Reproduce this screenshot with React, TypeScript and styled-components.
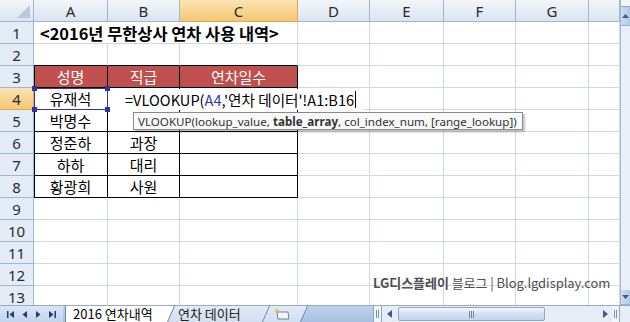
import React from 'react';
import styled, { createGlobalStyle } from 'styled-components';

const GRID = '#d0d7e5';
const HEAD_LINE = '#9eb6ce';
const REF_BLUE = '#2e34a6';
const KR = `"Noto Sans CJK KR", "Noto Sans", sans-serif`;
const LATIN = `"Noto Sans", "Noto Sans CJK KR", sans-serif`;

const GlobalStyle = createGlobalStyle`
  html, body { margin: 0; padding: 0; overflow: hidden; background: #fff; }
  body { font-family: ${KR}; }
`;

const Window = styled.div`
  width: 630px;
  height: 322px;
  display: flex;
  flex-direction: column;
  overflow: hidden;
`;

const Body = styled.div`
  display: flex;
  height: 305px;
`;

const Sheet = styled.div`
  position: relative;
  flex: 1;
  overflow: hidden;
  display: grid;
  grid-template-columns: 34px 74px 72px 118px 72px 74px 72px 73px 1fr;
  grid-auto-rows: 22px;
`;

const Corner = styled.div`
  position: relative;
  box-sizing: border-box;
  border-right: 1px solid ${HEAD_LINE};
  border-bottom: 1px solid ${HEAD_LINE};
  background: linear-gradient(#f3f6fb, #dbe4f0);
  &::after {
    content: '';
    position: absolute;
    right: 3px;
    bottom: 3px;
    border-left: 13px solid transparent;
    border-bottom: 13px solid #b9c9dd;
  }
`;

const ColHead = styled.div<{ $active?: boolean }>`
  box-sizing: border-box;
  border-right: 1px solid ${(p) => (p.$active ? '#e8a64a' : HEAD_LINE)};
  border-bottom: 1px solid ${(p) => (p.$active ? '#e8a64a' : HEAD_LINE)};
  background: ${(p) =>
    p.$active ? 'linear-gradient(#fbe3b4, #f5c873)' : 'linear-gradient(#f3f6fb, #dbe4f0)'};
  display: flex;
  align-items: center;
  justify-content: center;
  font-family: ${LATIN};
  font-size: 15px;
  color: #2b2b2b;
`;

const RowHead = styled.div<{ $active?: boolean }>`
  box-sizing: border-box;
  border-right: 1px solid ${(p) => (p.$active ? '#e8a64a' : HEAD_LINE)};
  border-bottom: 1px solid ${(p) => (p.$active ? '#e8a64a' : HEAD_LINE)};
  background: ${(p) => (p.$active ? 'linear-gradient(#fbe3b4, #f5c873)' : '#e4ecf7')};
  display: flex;
  align-items: center;
  justify-content: center;
  font-family: ${LATIN};
  font-size: 15px;
  color: #2b2b2b;
`;

const Cell = styled.div<{
  $right?: string;
  $bottom?: string;
  $edge?: boolean;
  $fill?: string;
  $span?: number;
  $bold?: boolean;
  $white?: boolean;
  $start?: boolean;
}>`
  box-sizing: border-box;
  border-right: 1px solid ${(p) => p.$right ?? GRID};
  border-bottom: 1px solid ${(p) => p.$bottom ?? GRID};
  background: ${(p) => p.$fill ?? '#fff'};
  box-shadow: ${(p) => (p.$edge ? 'inset 1px 0 0 #000' : 'none')};
  grid-column: span ${(p) => p.$span ?? 1};
  display: flex;
  align-items: center;
  justify-content: ${(p) => (p.$start ? 'flex-start' : 'center')};
  padding-left: ${(p) => (p.$start ? '6px' : '0')};
  font-size: ${(p) => (p.$bold ? '16.4px' : '15px')};
  font-weight: ${(p) => (p.$bold ? 700 : 400)};
  color: ${(p) => (p.$white ? '#fff' : '#000')};
  white-space: nowrap;
`;

const EditBox = styled.div`
  position: absolute;
  left: 109px;
  top: 89px;
  width: 254px;
  height: 21px;
  box-sizing: border-box;
  padding-left: 16px;
  background: #fff;
  display: flex;
  align-items: center;
  font-size: 14.6px;
  white-space: nowrap;
  color: #000;
`;

const Ref = styled.span`
  color: ${REF_BLUE};
`;

const Caret = styled.span`
  display: inline-block;
  width: 1px;
  height: 17px;
  margin-left: 1px;
  background: #000;
`;

const Selection = styled.div`
  position: absolute;
  left: 34px;
  top: 88px;
  width: 74px;
  height: 22px;
  box-sizing: border-box;
  border: 1px solid ${REF_BLUE};
`;

const Handle = styled.span<{ $x: 'left' | 'right'; $y: 'top' | 'bottom' }>`
  position: absolute;
  width: 5px;
  height: 5px;
  background: ${REF_BLUE};
  ${(p) => p.$x}: -3px;
  ${(p) => p.$y}: -3px;
`;

const Tooltip = styled.div`
  position: absolute;
  left: 133px;
  top: 112px;
  width: 390px;
  height: 18px;
  box-sizing: border-box;
  padding-left: 4px;
  background: #f9f9f9;
  border: 1px solid #8a8a8a;
  box-shadow: 2px 2px 2px rgba(0, 0, 0, 0.25);
  display: flex;
  align-items: center;
  font-family: ${LATIN};
  font-size: 11.6px;
  color: #333;
  white-space: nowrap;
`;

const Watermark = styled.div`
  position: absolute;
  left: 373px;
  top: 273px;
  font-size: 13px;
  letter-spacing: -0.05px;
  color: #4f4f4f;
  white-space: nowrap;
  b {
    font-weight: 700;
  }
`;

const VScroll = styled.div`
  width: 10px;
  display: flex;
  flex-direction: column;
  box-sizing: border-box;
  border-left: 1px solid #a7bad4;
  background: #e6edf7;
`;

const SplitBox = styled.div`
  height: 7px;
  box-sizing: border-box;
  border-bottom: 1px solid #8ea6c8;
  background: #f2f6fb;
`;

const ArrowButton = styled.div<{ $h: number }>`
  height: ${(p) => p.$h}px;
  display: flex;
  align-items: center;
  justify-content: center;
  background: linear-gradient(90deg, #cfdcee, #b4c8e4);
  border-bottom: 1px solid #9ab0d0;
`;

const Track = styled.div`
  flex: 1;
  background: #e9eff8;
`;

const TabBar = styled.div`
  height: 17px;
  display: flex;
  box-sizing: border-box;
  border-top: 1px solid #93aacb;
  background: linear-gradient(#dbe6f4, #c3d4eb);
`;

const NavButtons = styled.div`
  width: 63px;
  display: flex;
  align-items: center;
  justify-content: space-around;
  padding: 0 4px;
  box-sizing: border-box;
`;

const Tabs = styled.div`
  width: 310px;
  display: flex;
  background: linear-gradient(#bfd1ea, #a8c0e2);
`;

const Tab = styled.div<{ $w: number; $layer: number; $active?: boolean; $first?: boolean }>`
  position: relative;
  z-index: ${(p) => p.$layer};
  width: ${(p) => p.$w}px;
  margin-left: ${(p) => (p.$first ? '2px' : '-7px')};
  box-sizing: border-box;
  padding: 0 0 1px ${(p) => (p.$active ? '8px' : '10px')};
  display: flex;
  align-items: center;
  font-size: 13px;
  line-height: 14px;
  color: ${(p) => (p.$active ? '#000' : '#222')};
  white-space: nowrap;

  &::before,
  &::after {
    content: '';
    position: absolute;
    top: 0;
    bottom: 0;
    z-index: -1;
  }
  &::before {
    left: 0;
    right: 0;
    background: #6f88b0;
    clip-path: polygon(0 0, 100% 0, calc(100% - 7px) 100%, 0 100%);
  }
  &::after {
    left: ${(p) => (p.$active ? '1px' : '0')};
    right: 0;
    background: ${(p) => (p.$active ? '#ffffff' : 'linear-gradient(#e3ebf6, #d2dff0)')};
    clip-path: polygon(0 0, calc(100% - 1px) 0, calc(100% - 8px) 100%, 0 100%);
  }
`;

const HScroll = styled.div`
  flex: 1;
  display: flex;
  align-items: stretch;
  background: #e6edf7;
  border-left: 1px solid #8ea6c8;
`;

const HSplit = styled.div`
  width: 7px;
  display: flex;
  align-items: center;
  justify-content: center;
  background: #f2f6fb;
  border-right: 1px solid #8ea6c8;
  &::after {
    content: '';
    width: 1px;
    height: 8px;
    border-left: 1px solid #7a8fb0;
    border-right: 1px solid #7a8fb0;
  }
`;

const HArrow = styled.div`
  width: 14px;
  display: flex;
  align-items: center;
  justify-content: center;
`;

const HTrack = styled.div`
  flex: 1;
  display: flex;
  align-items: center;
  padding: 1px 2px;
`;

const Thumb = styled.div`
  width: 147px;
  height: 14px;
  box-sizing: border-box;
  border: 1px solid #8ea6c8;
  border-radius: 2px;
  background: linear-gradient(#f4f7fc, #d2deef 55%, #c4d4ea);
  display: flex;
  align-items: center;
  justify-content: center;
  &::after {
    content: '';
    width: 5px;
    height: 7px;
    background: repeating-linear-gradient(90deg, #6f84a6 0 1px, transparent 1px 2px);
  }
`;

const Corner2 = styled.div`
  width: 10px;
  background: #e6edf7;
`;

function NavIcon({ kind }: { kind: 'first' | 'prev' | 'next' | 'last' }) {
  const c = '#1e3c78';
  return (
    <svg width="9" height="9" viewBox="0 0 9 9">
      {kind === 'first' && (
        <>
          <rect x="1" y="1" width="1.5" height="7" fill={c} />
          <path d="M8 1 L3.5 4.5 L8 8 Z" fill={c} />
        </>
      )}
      {kind === 'prev' && <path d="M7 1 L2.5 4.5 L7 8 Z" fill={c} />}
      {kind === 'next' && <path d="M2 1 L6.5 4.5 L2 8 Z" fill={c} />}
      {kind === 'last' && (
        <>
          <path d="M1 1 L5.5 4.5 L1 8 Z" fill={c} />
          <rect x="6.5" y="1" width="1.5" height="7" fill={c} />
        </>
      )}
    </svg>
  );
}

function InsertSheetIcon() {
  return (
    <svg width="18" height="14" viewBox="0 0 18 14">
      <path d="M4 5 H15 L16 12 H5 Z" fill="#f4f7fb" stroke="#6d7f9c" strokeWidth="1" />
      <path d="M4 1 L5 3.5 L7.5 4 L5 4.6 L4 7 L3 4.6 L0.5 4 L3 3.5 Z" fill="#f2b623" />
    </svg>
  );
}

type RowData = { cells: React.ReactNode[] };

const people = [
  ['유재석', ''],
  ['박명수', ''],
  ['정준하', '과장'],
  ['하하', '대리'],
  ['황광희', '사원'],
];

const COLS = ['A', 'B', 'C', 'D', 'E', 'F', 'G', ''];

function plainCells(from: number) {
  return COLS.slice(from).map((_, i) => <Cell key={`p${from + i}`} />);
}

export default function App() {
  const rows: RowData[] = [];

  rows.push({
    cells: [
      <Cell key="title" $span={3} $start $bold>
        &lt;2016년 무한상사 연차 사용 내역&gt;
      </Cell>,
      ...plainCells(3),
    ],
  });
  rows.push({
    cells: [
      <Cell key="a2" $bottom="#000" />,
      <Cell key="b2" $bottom="#000" />,
      <Cell key="c2" $bottom="#000" />,
      ...plainCells(3),
    ],
  });
  rows.push({
    cells: [
      <Cell key="h1" $fill="#c0504d" $white $right="#000" $bottom="#000" $edge>
        성명
      </Cell>,
      <Cell key="h2" $fill="#c0504d" $white $right="#000" $bottom="#000">
        직급
      </Cell>,
      <Cell key="h3" $fill="#c0504d" $white $right="#000" $bottom="#000">
        연차일수
      </Cell>,
      ...plainCells(3),
    ],
  });
  people.forEach(([name, rank]) => {
    rows.push({
      cells: [
        <Cell key="n" $right="#000" $bottom="#000" $edge>
          {name}
        </Cell>,
        <Cell key="r" $right="#000" $bottom="#000">
          {rank}
        </Cell>,
        <Cell key="d" $right="#000" $bottom="#000" />,
        ...plainCells(3),
      ],
    });
  });
  for (let i = 0; i < 5; i++) rows.push({ cells: plainCells(0) });

  return (
    <Window>
      <GlobalStyle />
      <Body>
        <Sheet>
          <Corner />
          {COLS.map((c, i) => (
            <ColHead key={`c${i}`} $active={c === 'C'}>
              {c}
            </ColHead>
          ))}
          {rows.map((row, r) => (
            <React.Fragment key={r}>
              <RowHead $active={r === 3}>{r + 1}</RowHead>
              {row.cells}
            </React.Fragment>
          ))}

          <EditBox>
            =VLOOKUP(<Ref>A4</Ref>,'연차 데이터'!A1:B16
            <Caret />
          </EditBox>
          <Selection>
            <Handle $x="left" $y="top" />
            <Handle $x="right" $y="top" />
            <Handle $x="left" $y="bottom" />
            <Handle $x="right" $y="bottom" />
          </Selection>
          <Tooltip>
            VLOOKUP(lookup_value,&nbsp;<b>table_array</b>, col_index_num, [range_lookup])
          </Tooltip>
          <Watermark>
            <b>LG디스플레이</b> 블로그 | Blog.lgdisplay.com
          </Watermark>
        </Sheet>
        <VScroll>
          <SplitBox />
          <ArrowButton $h={18}>
            <svg width="7" height="4" viewBox="0 0 7 4">
              <path d="M0 4 L3.5 0 L7 4 Z" fill="#3d5a8c" />
            </svg>
          </ArrowButton>
          <Track />
          <ArrowButton $h={14}>
            <svg width="7" height="4" viewBox="0 0 7 4">
              <path d="M0 0 L3.5 4 L7 0 Z" fill="#3d5a8c" />
            </svg>
          </ArrowButton>
        </VScroll>
      </Body>
      <TabBar>
        <NavButtons>
          <NavIcon kind="first" />
          <NavIcon kind="prev" />
          <NavIcon kind="next" />
          <NavIcon kind="last" />
        </NavButtons>
        <Tabs>
          <Tab $w={110} $layer={3} $active $first>
            2016 연차내역
          </Tab>
          <Tab $w={102} $layer={2}>
            연차 데이터
          </Tab>
          <Tab $w={45} $layer={1}>
            <InsertSheetIcon />
          </Tab>
        </Tabs>
        <HScroll>
          <HSplit />
          <HArrow>
            <svg width="5" height="8" viewBox="0 0 5 8">
              <path d="M5 0 L0 4 L5 8 Z" fill="#3d5a8c" />
            </svg>
          </HArrow>
          <HTrack>
            <Thumb />
          </HTrack>
          <HArrow>
            <svg width="5" height="8" viewBox="0 0 5 8">
              <path d="M0 0 L5 4 L0 8 Z" fill="#3d5a8c" />
            </svg>
          </HArrow>
          <HSplit />
        </HScroll>
        <Corner2 />
      </TabBar>
    </Window>
  );
}
